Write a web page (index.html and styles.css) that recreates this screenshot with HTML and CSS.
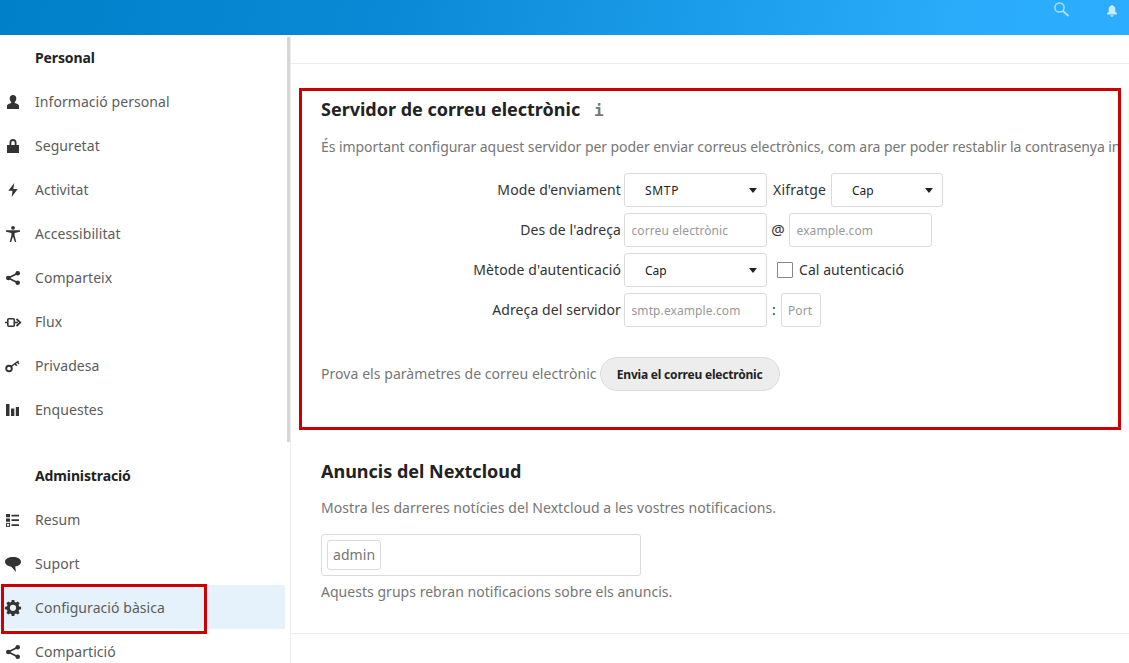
FILE: index.html
```html
<!DOCTYPE html>
<html lang="ca">
<head>
<meta charset="utf-8">
<title>Configuració bàsica</title>
<link rel="stylesheet" href="styles.css">
</head>
<body>
<header class="topbar">
  <svg class="top-icon top-icon-search" viewBox="0 0 16 16"><circle cx="5.500" cy="5.500" r="4.600" fill="none" stroke="currentColor" stroke-width="1.500"/><path d="M8.900 8.900l5.600 5" fill="none" stroke="currentColor" stroke-width="2"/></svg>
  <svg class="top-icon top-icon-bell" viewBox="0 0 16 16"><path d="M8 3c.5 0 .9.300 1 .8 1.500.5 2.300 1.700 2.300 3.200v2.500L13 11.500v1H3v-1l1.700-2V7c0-1.500.8-2.700 2.300-3.200.1-.5.500-.8 1-.8zM6.500 13.300h3c0 1-.6 1.500-1.500 1.500s-1.500-.5-1.500-1.500z" fill="currentColor"/></svg>
</header>
<div class="layout">
  <nav class="sidebar">
    <h3 class="nav-title">Personal</h3>
    <a class="nav-item"><svg class="nav-icon" viewBox="0 0 16 16"><path d="M8 2c2.100 0 3.300 1.400 3.300 3.400 0 1.400-.6 2.700-1.500 3.500v1.200c1.800.7 3.900 1.300 4.200 2.500V16H2v-3.400c.3-1.200 2.400-1.800 4.200-2.500V8.900C5.300 8.100 4.700 6.800 4.700 5.400 4.700 3.400 5.900 2 8 2z"/></svg><span>Informació personal</span></a>
    <a class="nav-item"><svg class="nav-icon" viewBox="0 0 16 16"><path d="M8 2C5.800 2 4.500 3.500 4.500 5.500V8H2v8h12V8h-2.500V5.500C11.500 3.500 10.200 2 8 2zm0 1.900c1.200 0 1.700.7 1.700 1.900V8H6.300V5.800C6.300 4.600 6.800 3.900 8 3.900z"/></svg><span>Seguretat</span></a>
    <a class="nav-item"><svg class="nav-icon" viewBox="0 0 16 16"><path d="M9.300 2 3.300 9.800h4.200L6.700 16l6-8H8.300z"/></svg><span>Activitat</span></a>
    <a class="nav-item"><svg class="nav-icon" viewBox="0 0 16 16"><circle cx="8" cy="2.800" r="1.900"/><path d="M1 5.300h14v1.400L9.600 8v2.500L11.300 17H9.900L8 11.500 6.100 17H4.700l1.700-6.500V8L1 6.700z"/></svg><span>Accessibilitat</span></a>
    <a class="nav-item"><svg class="nav-icon" viewBox="0 0 16 16"><circle cx="3.300" cy="9" r="2.300"/><circle cx="12.700" cy="4.300" r="2.300"/><circle cx="12.700" cy="13.700" r="2.300"/><path d="M3.300 9l9.400-4.700M3.300 9l9.400 4.700" stroke="currentColor" stroke-width="1.800" fill="none"/></svg><span>Comparteix</span></a>
    <a class="nav-item"><svg class="nav-icon" viewBox="0 0 16 16"><path d="M0 9.500h2.500M9.500 9.500h3.500M11.500 6l3.800 3.500-3.800 3.500" fill="none" stroke="currentColor" stroke-width="1.700"/><rect x="2.800" y="5.800" width="6.500" height="7.500" rx="1" fill="none" stroke="currentColor" stroke-width="1.600"/></svg><span>Flux</span></a>
    <a class="nav-item"><svg class="nav-icon" viewBox="0 0 16 16"><circle cx="4" cy="11.500" r="2.800" fill="none" stroke="currentColor" stroke-width="1.900"/><path d="M6 9.500 13.500 4M10.200 6.800l1.500 2M12.500 5l1.300 1.900" fill="none" stroke="currentColor" stroke-width="1.500"/></svg><span>Privadesa</span></a>
    <a class="nav-item"><svg class="nav-icon" viewBox="0 0 16 16"><path d="M1 3h3.500v12H1zM6 7.500h3.300V15H6zM10.800 6H14v9h-3.200z"/></svg><span>Enquestes</span></a>
    <h3 class="nav-title nav-title-gap">Administració</h3>
    <a class="nav-item"><svg class="nav-icon" viewBox="0 0 16 16"><path d="M1 3h4v3.300H1zM1 7.500h4v3.300H1zM6.500 3.800H14v1.700H6.500zM6.500 8.300H14V10H6.500zM6.500 13.300H14V15H6.500z"/><rect x="1.500" y="12.400" width="3" height="3" fill="none" stroke="currentColor"/></svg><span>Resum</span></a>
    <a class="nav-item"><svg class="nav-icon" viewBox="0 0 16 16"><path d="M8 2c4.400 0 8 1.800 8 4.800 0 2.600-2.500 4.400-5.800 4.800L11 17l-4.700-5.300C2.700 11.300 0 9.400 0 6.800 0 3.800 3.600 2 8 2z"/></svg><span>Suport</span></a>
    <a class="nav-item nav-item-active"><svg class="nav-icon" viewBox="0 0 16 16"><path fill-rule="evenodd" d="M6.700 1h2.600l.4 2 1.300.6 1.800-1.100 1.800 1.800-1.100 1.800.6 1.300 2 .4v2.500l-2 .4-.6 1.300 1.100 1.800-1.800 1.800-1.800-1.100-1.300.6-.4 2H6.700l-.4-2-1.300-.6-1.800 1.100-1.800-1.800 1.100-1.800-.6-1.300-2-.4V7.800l2-.4.6-1.300-1.100-1.800 1.800-1.800L5 3.600 6.300 3zM8 5.700a3.100 3.100 0 1 0 0 6.200 3.100 3.100 0 0 0 0-6.200z"/></svg><span>Configuració bàsica</span></a>
    <a class="nav-item"><svg class="nav-icon" viewBox="0 0 16 16"><circle cx="3.300" cy="9" r="2.300"/><circle cx="12.700" cy="4.300" r="2.300"/><circle cx="12.700" cy="13.700" r="2.300"/><path d="M3.300 9l9.400-4.700M3.300 9l9.400 4.700" stroke="currentColor" stroke-width="1.800" fill="none"/></svg><span>Compartició</span></a>
    <div class="scroll-thumb"></div>
    <div class="mark mark-nav"></div>
  </nav>
  <main class="content">
    <div class="blank-section"></div>
    <section class="mail-section">
      <h2 class="section-title">Servidor de correu electrònic <span class="info-mark">i</span></h2>
      <p class="section-desc desc-long">És important configurar aquest servidor per poder enviar correus electrònics, com ara per poder restablir la contrasenya inicial.</p>
      <form class="mail-form">
        <div class="form-row">
          <label class="form-label">Mode d'enviament</label>
          <div class="select-box select-main"><select class="select select-smtp"><option>SMTP</option></select></div>
          <span class="form-text text-xifratge">Xifratge</span>
          <div class="select-box select-small"><select class="select"><option>Cap</option></select></div>
        </div>
        <div class="form-row">
          <label class="form-label">Des de l'adreça</label>
          <input class="input input-main" placeholder="correu electrònic">
          <span class="form-text text-at">@</span>
          <input class="input input-main" placeholder="example.com">
        </div>
        <div class="form-row">
          <label class="form-label">Mètode d'autenticació</label>
          <div class="select-box select-main"><select class="select"><option>Cap</option></select></div>
          <span class="checkbox"></span>
          <span class="form-text text-auth">Cal autenticació</span>
        </div>
        <div class="form-row">
          <label class="form-label">Adreça del servidor</label>
          <input class="input input-main" placeholder="smtp.example.com">
          <span class="form-text text-colon">:</span>
          <input class="input input-port" placeholder="Port">
        </div>
      </form>
      <div class="test-row">
        <span class="test-text">Prova els paràmetres de correu electrònic</span>
        <button class="send-button" type="button">Envia el correu electrònic</button>
      </div>
    </section>
    <section class="news-section">
      <h2 class="section-title news-title">Anuncis del Nextcloud</h2>
      <p class="section-desc">Mostra les darreres notícies del Nextcloud a les vostres notificacions.</p>
      <div class="tag-field"><span class="tag">admin</span></div>
      <p class="section-desc hint">Aquests grups rebran notificacions sobre els anuncis.</p>
    </section>
  </main>
</div>
</body>
</html>
```

FILE: styles.css
```css
* { box-sizing: border-box; }
html, body { margin: 0; height: 100%; overflow: hidden; }
body {
  font-family: "Noto Sans", sans-serif;
  font-size: 14px;
  letter-spacing: .06px;
  color: #222;
  background: #fff;
  display: flex;
  flex-direction: column;
}
.topbar {
  flex: 0 0 35px;
  display: flex;
  justify-content: flex-end;
  align-items: flex-start;
  gap: 34px;
  padding: 2px 9px 0 0;
  background: linear-gradient(100deg, #0080c8 0%, #0a8ad6 35%, #2aacfb 85%, #2cadff 100%);
}
.top-icon { width: 16px; height: 16px; overflow: visible; }
.top-icon-search { color: rgba(255, 255, 255, .6); }
.top-icon-bell { color: rgba(255, 255, 255, .75); }
.layout { flex: 1; display: flex; min-height: 0; }
.sidebar {
  position: relative;
  flex: 0 0 291px;
  border-right: 1px solid #ededed;
  overflow: hidden;
}
.nav-title {
  margin: 0;
  height: 44px;
  line-height: 44px;
  padding: 1px 0 0 35px;
  font-size: 14px;
  font-weight: 700;
  letter-spacing: -.12px;
  color: #222;
}
.nav-title-gap { margin-top: 22px; }
.nav-item {
  display: flex;
  align-items: center;
  width: 285px;
  height: 44px;
  color: #5c5c5c;
}
.nav-item span { margin-left: 14px; }
.nav-icon { width: 16px; height: 16px; margin-left: 5px; fill: #333; color: #333; flex: none; overflow: visible; }
.nav-item-active { background: #e5f2fb; }
.scroll-thumb {
  position: absolute;
  left: 287px;
  top: 2px;
  width: 3px;
  height: 405px;
  background: #d6d6d6;
}
.mark { position: absolute; border: 3px solid #cc0000; }
.mark-nav { left: 1px; top: 549px; width: 206px; height: 50px; }
.content { flex: 1; min-width: 0; overflow: hidden; }
.blank-section { height: 29px; border-bottom: 1px solid #ededed; }
.mail-section {
  margin: 24px 8px 0;
  height: 342px;
  padding: 3px 19px 0;
  border: 3px solid #cc0000;
  overflow: hidden;
}
.news-section {
  padding: 26px 30px 30px;
  border-bottom: 1px solid #ededed;
}
.section-title {
  margin: 0 0 10px;
  font-size: 18px;
  line-height: 30px;
  font-weight: 700;
  letter-spacing: 0;
  color: #222;
}
.news-title { margin-bottom: 11px; }
.info-mark { margin-left: 9px; color: #777; font-family: "DejaVu Sans Mono", monospace; font-size: 16px; }
.section-desc {
  margin: 0;
  line-height: 22px;
  color: #767676;
  white-space: nowrap;
}
.desc-long { letter-spacing: -.06px; }
.mail-form { margin-top: 15px; display: flex; flex-direction: column; gap: 6px; }
.form-row { display: flex; align-items: center; height: 34px; }
.form-label { width: 303px; padding: 0 3px 2px 0; text-align: right; color: #333; letter-spacing: .1px; }
.form-text { padding-bottom: 2px; color: #333; }
.select-box { position: relative; height: 34px; }
.select-box::after {
  content: "";
  position: absolute;
  right: 10px;
  top: 15px;
  border: 4px solid transparent;
  border-top: 5px solid #222;
  border-bottom: 0;
}
.select-main { width: 143px; }
.select-small { width: 112px; }
.select {
  appearance: none;
  width: 100%;
  height: 100%;
  padding: 0 0 0 20px;
  border: 1px solid #dbdbdb;
  border-radius: 3px;
  background: #fff;
  color: #222;
  font: 12px "Noto Sans", sans-serif;
}
.select-smtp { letter-spacing: .7px; }
.input {
  height: 34px;
  padding: 0 6.500px;
  border: 1px solid #dbdbdb;
  border-radius: 3px;
  font: 12px "Noto Sans", sans-serif;
  letter-spacing: .1px;
  color: #222;
  background: #fff;
}
.input::placeholder { color: #999; opacity: 1; }
.input-main { width: 143px; }
.input-port { width: 40px; padding: 0 6px; }
.text-xifratge { width: 64px; padding-left: 6px; letter-spacing: .2px; }
.text-at { width: 22px; text-align: center; font-size: 15px; }
.text-colon { width: 14px; text-align: center; }
.checkbox {
  width: 16px;
  height: 16px;
  margin-left: 10px;
  border: 1px solid #878787;
  border-radius: 1px;
}
.text-auth { margin-left: 6px; }
.test-row { margin-top: 30px; display: flex; align-items: center; gap: 3px; }
.test-text { color: #767676; padding-bottom: 2px; }
.send-button {
  width: 180px;
  height: 34px;
  padding: 0;
  border: 1px solid #dbdbdb;
  border-radius: 17px;
  background: #ededed;
  color: #222;
  font: 700 12px "Noto Sans", sans-serif;
  letter-spacing: -.2px;
}
.tag-field {
  margin-top: 15px;
  width: 320px;
  height: 42px;
  padding: 5px;
  border: 1px solid #dbdbdb;
  border-radius: 3px;
}
.tag {
  display: inline-block;
  height: 30px;
  line-height: 28px;
  padding: 0 5px;
  border: 1px solid #dbdbdb;
  border-radius: 3px;
  color: #767676;
}
.hint { margin-top: 5px; letter-spacing: .03px; }
```
